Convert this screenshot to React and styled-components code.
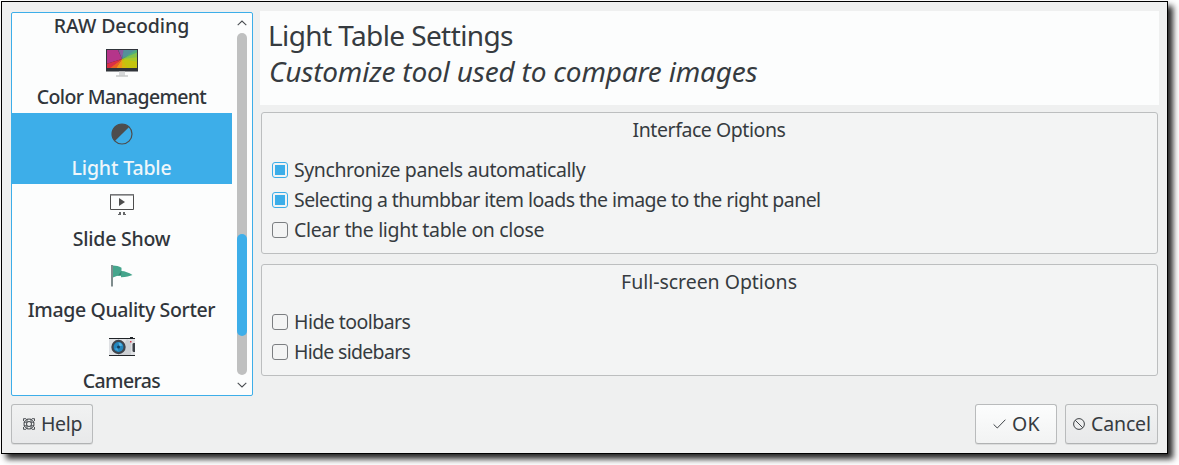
import React from 'react';
import styled, { createGlobalStyle, css } from 'styled-components';

const GlobalStyle = createGlobalStyle`
  * { box-sizing: border-box; }
  body {
    margin: 0;
    background: #fff;
    color: #363b40;
    font-family: "Noto Sans", "Open Sans", sans-serif;
    font-size: 19.5px;
    overflow: hidden;
  }
`;

const Screen = styled.div`
  height: 465px;
  padding: 1px 0 0 1px;
  overflow: hidden;
`;

const Dialog = styled.div`
  width: 1167px;
  height: 453px;
  display: flex;
  flex-direction: column;
  gap: 8px;
  padding: 9px 9px 9px 9px;
  border: 1px solid #000;
  background: #eff0f0;
  box-shadow: 5px 5px 6px rgba(0, 0, 0, 0.85);
`;

const Body = styled.div`
  display: flex;
  gap: 7px;
  height: 384px;
  margin-top: 1px;
`;

const Sidebar = styled.nav`
  width: 242px;
  flex: none;
  display: flex;
  border: 1px solid #3daee9;
  border-radius: 2px;
  background: #fcfdfd;
  overflow: hidden;
`;

const PageList = styled.ul`
  width: 220px;
  margin: -42px 0 0;
  padding: 0;
  list-style: none;
`;

const PageItem = styled.li`
  height: 71px;
  display: flex;
  flex-direction: column;
  align-items: center;
  padding-top: 5px;
  font-weight: 500;
  color: ${(p) => (p.$selected ? '#eff6fa' : '#31363b')};
  background: ${(p) => (p.$selected ? '#3daee9' : 'transparent')};

  svg { display: block; flex: none; }
`;

const Label = styled.span`
  line-height: 28px;
  white-space: nowrap;
  letter-spacing: ${(p) => p.$tracking || 0}px;
`;

const PageLabel = styled(Label)`
  margin: 4px 1px 0 0;
`;

const ScrollBar = styled.div`
  width: 20px;
  display: flex;
  flex-direction: column;
  align-items: center;
  justify-content: space-between;
  padding: 6px 0 6px;

  svg { display: block; }
`;

const Groove = styled.div`
  width: 10px;
  height: 342px;
  padding-top: 201px;
  border-radius: 5px;
  background: #bfc0c0;
`;

const Thumb = styled.div`
  height: 102px;
  border-radius: 5px;
  background: #3daee9;
`;

const Content = styled.main`
  width: 899px;
  flex: none;
  margin-top: -1px;
`;

const Header = styled.header`
  height: 94px;
  padding: 5px 8px;
  background: #fcfdfd;
  font-size: 28px;
`;

const Title = styled.h1`
  margin: 0;
  font-size: inherit;
  font-weight: 400;
  line-height: 38px;
  letter-spacing: -0.6px;
`;

const Subtitle = styled.p`
  margin: -2px 0 0 1px;
  font-style: italic;
  line-height: 38px;
  letter-spacing: -0.19px;
`;

const Group = styled.section`
  height: ${(p) => p.$height}px;
  margin: ${(p) => p.$gap}px 1px 0;
  padding: 3px 10px;
  border: 1px solid #bcbebf;
  border-radius: 3px;
  background: #f3f4f4;
`;

const GroupTitle = styled.h2`
  margin: 0 1px 11px 0;
  font-size: inherit;
  font-weight: 400;
  line-height: 28px;
  text-align: center;
  letter-spacing: ${(p) => p.$tracking}px;
`;

const Option = styled.div`
  height: 30px;
  display: flex;
  align-items: center;
  gap: 6px;
`;

const Box = styled.span`
  width: 16px;
  height: 16px;
  display: block;
  padding: 2px;
  border: 1px solid #7b7e81;
  border-radius: 3px;

  ${(p) => p.$checked && css`
    border-color: #3daee9;
    background: #3daee9 content-box;
  `}
`;

const Footer = styled.footer`
  display: flex;
  gap: 8px;
`;

const Spacer = styled.div`
  flex: 1;
`;

const Button = styled.button`
  width: ${(p) => p.$width}px;
  height: 40px;
  display: flex;
  align-items: center;
  padding: 0 0 0 ${(p) => p.$inset}px;
  gap: ${(p) => p.$gap}px;
  border: 1px solid #b9bbbc;
  border-bottom-color: #b0b2b3;
  border-radius: 3px;
  background: ${(p) => (p.$primary ? 'linear-gradient(#fcfdfd, #f2f3f3)' : 'linear-gradient(#f1f2f2, #e8e9ea)')};
  box-shadow: 0 1px 0 #dcdddd;
  color: inherit;
  font: inherit;

  svg { display: block; flex: none; }
`;

const MonitorIcon = () => (
  <svg width="32" height="32" viewBox="0 0 32 32">
    <rect y="2" width="32" height="22.5" fill="#30343a" />
    <svg x="1" y="3" width="30" height="18" viewBox="1 3 30 18">
      <path d="M16 12L0 17V3h12z" fill="#b5358a" />
      <path d="M16 12L11 0h8z" fill="#8a5aa0" />
      <path d="M16 12L18 0h14v3z" fill="#55909a" />
      <path d="M16 12L31 2v5z" fill="#4fae7c" />
      <path d="M16 12L32 5v7z" fill="#83c14b" />
      <path d="M16 12L32 10v8z" fill="#a8c928" />
      <path d="M16 12L32 15v8H18z" fill="#c4c40f" />
      <path d="M16 12L23 24h-7z" fill="#d5b90f" />
      <path d="M16 12v10H9z" fill="#ef9a1a" />
      <path d="M16 12L10 22H1z" fill="#ea6422" />
      <path d="M16 12L3 22H0v-5z" fill="#dc2f45" />
    </svg>
    <path d="M13 24.5h6v4h-6z" fill="#d6d8d9" />
    <path d="M10 28.5h12v1H10z" fill="#aeb1b2" />
  </svg>
);

const LightTableIcon = () => (
  <svg width="32" height="32" viewBox="0 0 32 32">
    <circle cx="16" cy="16" r="10" fill="none" stroke="#4d4d4d" strokeWidth="1.2" />
    <path d="M23.1 8.9A10 10 0 0 0 8.9 23.1z" fill="#4d4d4d" />
  </svg>
);

const SlideShowIcon = () => (
  <svg width="32" height="32" viewBox="0 0 32 32">
    <path d="M4.5 5.7h23v14.8h-23z" fill="none" stroke="#4d4d4d" />
    <path d="M4 5h24v1.5H4z" fill="#77787a" />
    <path d="M13 9l6 4-6 4z" fill="#4d4d4d" />
    <path d="M13 23h2v3h-3v-1h1zM17 23h2v2h1v1h-3z" fill="#66686a" />
  </svg>
);

const FlagIcon = () => (
  <svg width="32" height="32" viewBox="0 0 32 32">
    <path d="M5 5h2v21.5H5z" fill="#7f8c8d" />
    <path d="M7 5.5c3 0 6 .7 8.500 2.200v3.300c3.500.2 7 1.500 11 4-3 1-6 2-11.500 2.200v-1.700c-3 .2-5.500.8-8 2z" fill="#45a58c" />
    <path d="M15.500 11l-3.500 4.600 3 -.1z" fill="#348571" />
  </svg>
);

const CameraIcon = () => (
  <svg width="32" height="32" viewBox="0 0 32 32">
    <path d="M3 7h26v18H3z" fill="#dfe1e4" />
    <path d="M21 8l4 3v13H12z" fill="#cdd0d4" />
    <path d="M3 7h26v1H3zM3 24h26v1H3zM24 6h3v1h-3z" fill="#202428" />
    <circle cx="12.500" cy="16" r="7.200" fill="#40464e" />
    <circle cx="12.500" cy="16" r="4.900" fill="#2386bd" />
    <path d="M12.500 11.500a4.500 4.500 0 0 1 4 3l-3 .8z" fill="#55b4e4" />
    <path d="M8.500 18l3-1.500 1 4z" fill="#3fa3dc" />
    <circle cx="12.500" cy="16" r="1.500" fill="#163e5c" />
    <path d="M24 10h1.500v1.500H24z" fill="#d13a50" />
    <path d="M27.500 12H29v9h-1.500q-1-.2-1-1.500v-6q0-1.300 1-1.500z" fill="#3c4047" />
  </svg>
);

const Chevron = ({ d }) => (
  <svg width="10" height="8" viewBox="0 0 10 8">
    <path d={d} fill="none" stroke="#4b4f53" strokeWidth="1.1" />
  </svg>
);

const HelpIcon = () => (
  <svg width="12" height="12" viewBox="0 0 12 12" fill="none" stroke="#3f4347">
    <circle cx="6" cy="6" r="5" />
    <circle cx="6" cy="6" r="2.500" />
    <path d="M.5 3V.7h2.500M9 .7h2.500V3M11.500 9v2.300H9M3 11.300H.5V9M4 .8v3.400H.8M8 .8v3.400h3.200M11.200 7.800H8v3.400M4 11.200V7.800H.8" strokeWidth=".9" />
  </svg>
);

const CheckIcon = () => (
  <svg width="13" height="12" viewBox="0 0 13 12" fill="none" stroke="#3f4347">
    <path d="M.6 6.400L4.300 10 12.400 1.700" />
  </svg>
);

const CancelIcon = () => (
  <svg width="12" height="12" viewBox="0 0 12 12" fill="none" stroke="#3f4347">
    <circle cx="6" cy="6" r="5.400" />
    <path d="M2.200 2.200l7.600 7.600" />
  </svg>
);

const pages = [
  { name: 'RAW Decoding', tracking: -0.07, icon: null },
  { name: 'Color Management', tracking: -0.66, icon: <MonitorIcon /> },
  { name: 'Light Table', tracking: -0.15, icon: <LightTableIcon />, selected: true },
  { name: 'Slide Show', tracking: -0.23, icon: <SlideShowIcon /> },
  { name: 'Image Quality Sorter', tracking: -0.36, icon: <FlagIcon /> },
  { name: 'Cameras', tracking: -0.62, icon: <CameraIcon /> },
];

const groups = [
  {
    title: 'Interface Options', tracking: -0.44, height: 142, gap: 7,
    options: [
      { text: 'Synchronize panels automatically', tracking: -0.42, checked: true },
      { text: 'Selecting a thumbbar item loads the image to the right panel', tracking: -0.54, checked: true },
      { text: 'Clear the light table on close', tracking: -0.34 },
    ],
  },
  {
    title: 'Full-screen Options', tracking: -0.03, height: 112, gap: 10,
    options: [
      { text: 'Hide toolbars', tracking: -0.55 },
      { text: 'Hide sidebars', tracking: -0.7 },
    ],
  },
];

export default function App() {
  return (
    <Screen>
      <GlobalStyle />
      <Dialog>
        <Body>
          <Sidebar>
            <PageList>
              {pages.map((p) => (
                <PageItem key={p.name} $selected={p.selected}>
                  {p.icon || <svg width="32" height="32" />}
                  <PageLabel $tracking={p.tracking}>{p.name}</PageLabel>
                </PageItem>
              ))}
            </PageList>
            <ScrollBar>
              <Chevron d="M.7 6.200L5 2l4.300 4.200" />
              <Groove><Thumb /></Groove>
              <Chevron d="M.7 1.800L5 6l4.300-4.200" />
            </ScrollBar>
          </Sidebar>
          <Content>
            <Header>
              <Title>Light Table Settings</Title>
              <Subtitle>Customize tool used to compare images</Subtitle>
            </Header>
            {groups.map((g) => (
              <Group key={g.title} $height={g.height} $gap={g.gap}>
                <GroupTitle $tracking={g.tracking}>{g.title}</GroupTitle>
                {g.options.map((o) => (
                  <Option key={o.text}>
                    <Box $checked={o.checked} />
                    <Label $tracking={o.tracking}>{o.text}</Label>
                  </Option>
                ))}
              </Group>
            ))}
          </Content>
        </Body>
        <Footer>
          <Button $width={82} $inset={11} $gap={6}>
            <HelpIcon />
            <Label $tracking={-0.33}>Help</Label>
          </Button>
          <Spacer />
          <Button $width={82} $inset={17} $gap={6} $primary>
            <CheckIcon />
            <Label $tracking={0.27}>OK</Label>
          </Button>
          <Button $width={93} $inset={7} $gap={6}>
            <CancelIcon />
            <Label $tracking={-0.14}>Cancel</Label>
          </Button>
        </Footer>
      </Dialog>
    </Screen>
  );
}
